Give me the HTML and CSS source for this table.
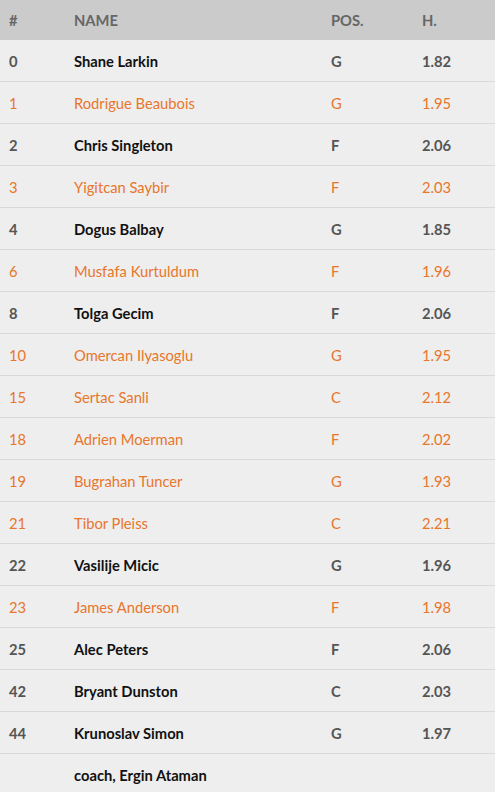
FILE: index.html
```html
<!DOCTYPE html>
<html lang="en">
  <head>
    <meta charset="UTF-8" />
    <meta name="viewport" content="width=device-width, initial-scale=1.0" />
    <title>Roster</title>
    <link rel="stylesheet" href="styles.css">
  </head>
  <body>
    <table class="roster">
      <thead>
        <tr>
          <th class="col-no">#</th>
          <th class="col-name">Name</th>
          <th class="col-pos">Pos.</th>
          <th class="col-h">H.</th>
        </tr>
      </thead>
      <tbody>
        <tr class="star"><td>0</td><td>Shane Larkin</td><td>G</td><td>1.82</td></tr>
        <tr class="local"><td>1</td><td>Rodrigue Beaubois</td><td>G</td><td>1.95</td></tr>
        <tr class="star"><td>2</td><td>Chris Singleton</td><td>F</td><td>2.06</td></tr>
        <tr class="local"><td>3</td><td>Yigitcan Saybir</td><td>F</td><td>2.03</td></tr>
        <tr class="star"><td>4</td><td>Dogus Balbay</td><td>G</td><td>1.85</td></tr>
        <tr class="local"><td>6</td><td>Musfafa Kurtuldum</td><td>F</td><td>1.96</td></tr>
        <tr class="star"><td>8</td><td>Tolga Gecim</td><td>F</td><td>2.06</td></tr>
        <tr class="local"><td>10</td><td>Omercan Ilyasoglu</td><td>G</td><td>1.95</td></tr>
        <tr class="local"><td>15</td><td>Sertac Sanli</td><td>C</td><td>2.12</td></tr>
        <tr class="local"><td>18</td><td>Adrien Moerman</td><td>F</td><td>2.02</td></tr>
        <tr class="local"><td>19</td><td>Bugrahan Tuncer</td><td>G</td><td>1.93</td></tr>
        <tr class="local"><td>21</td><td>Tibor Pleiss</td><td>C</td><td>2.21</td></tr>
        <tr class="star"><td>22</td><td>Vasilije Micic</td><td>G</td><td>1.96</td></tr>
        <tr class="local"><td>23</td><td>James Anderson</td><td>F</td><td>1.98</td></tr>
        <tr class="star"><td>25</td><td>Alec Peters</td><td>F</td><td>2.06</td></tr>
        <tr class="star"><td>42</td><td>Bryant Dunston</td><td>C</td><td>2.03</td></tr>
        <tr class="star"><td>44</td><td>Krunoslav Simon</td><td>G</td><td>1.97</td></tr>
        <tr class="star coach"><td></td><td>coach, Ergin Ataman</td><td></td><td></td></tr>
      </tbody>
    </table>
  </body>
</html>
```

FILE: styles.css
```css
body {
  margin: 0;
  background-color: #eeeeee;
  font-family: "Lato", "Liberation Sans", sans-serif;
  font-size: 0.92em;
}
.roster {
  width: 100%;
  border-collapse: collapse;
  table-layout: fixed;
}
.roster th {
  height: 40px;
  padding: 0 0 0 9px;
  background-color: #cbcbcb;
  color: #666666;
  font-weight: 700;
  text-align: left;
  text-transform: uppercase;
}
.col-no {
  width: 56px;
}
.col-name {
  width: 248px;
}
.col-pos {
  width: 82px;
}
.roster td {
  height: 41px;
  padding: 0 0 0 9px;
  border-bottom: 1px solid #d9d9d9;
}
.star td {
  color: #555555;
  font-weight: 700;
}
.star td:nth-child(2) {
  color: #111111;
}
.local td {
  color: #e8762b;
  font-weight: 400;
}
.coach td {
  border-bottom: none;
}
```
